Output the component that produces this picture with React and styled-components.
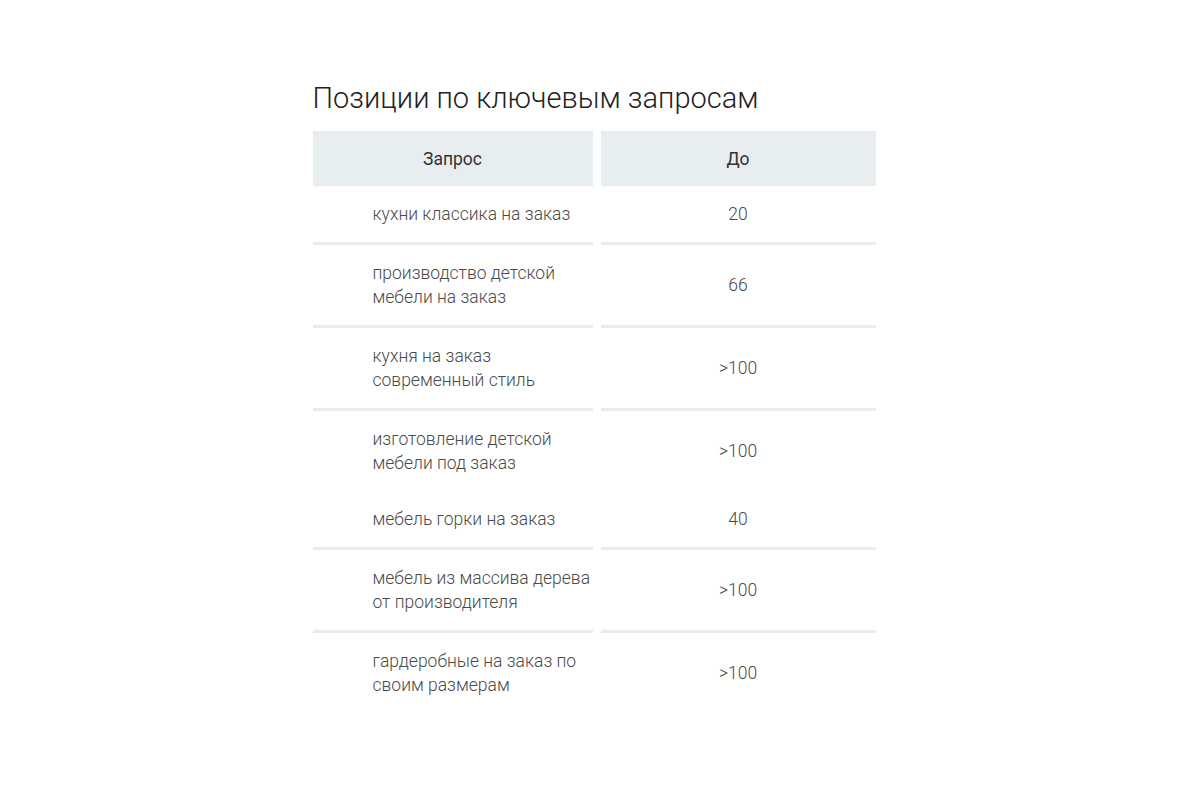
import React from 'react'
import styled, { createGlobalStyle } from 'styled-components'

const rows = [
  { query: 'кухни классика на заказ', pos: '20', line: true },
  { query: 'производство детской мебели на заказ', pos: '66', line: true },
  { query: 'кухня на заказ современный стиль', pos: '>100', line: true },
  { query: 'изготовление детской мебели под заказ', pos: '>100', line: false },
  { query: 'мебель горки на заказ', pos: '40', line: true },
  { query: 'мебель из массива дерева от производителя', pos: '>100', line: true },
  { query: 'гардеробные на заказ по своим размерам', pos: '>100', line: false },
]

function App() {
  return (
    <>
      <GlobalStyle />
      <Section>
        <Title>Позиции по ключевым запросам</Title>
        <Table>
          <HeadCell>Запрос</HeadCell>
          <HeadCell>До</HeadCell>
          {rows.map((r, i) => (
            <React.Fragment key={i}>
              <QueryCell $line={r.line}>{r.query}</QueryCell>
              <PosCell $line={r.line}>{r.pos}</PosCell>
            </React.Fragment>
          ))}
        </Table>
      </Section>
    </>
  )
}

export default App

const GlobalStyle = createGlobalStyle`
body {
    margin: 0;
    background: #fff;
    font-family: Roboto, "Liberation Sans", sans-serif;
}
`

const Section = styled.div`
width: 575px;
margin: 0 auto;
padding-top: 80px;
`

const Title = styled.h2`
margin: 0 0 15px;
font-size: 29px;
line-height: 36px;
font-weight: 300;
color: #222;
`

const Table = styled.div`
display: grid;
grid-template-columns: 280px 275px;
column-gap: 8px;
width: 563px;
`

const HeadCell = styled.div`
height: 55px;
display: flex;
align-items: center;
justify-content: center;
background: #e8edf0;
color: #333;
font-size: 17.5px;
font-weight: 400;
`

const Cell = styled.div`
padding: 16px 0;
display: flex;
align-items: center;
font-size: 17.5px;
line-height: 24px;
font-weight: 300;
color: #4a4a4a;
border-bottom: ${p => (p.$line ? '3px solid #ececec' : 'none')};
`

const QueryCell = styled(Cell)`
padding-left: 60px;
`

const PosCell = styled(Cell)`
justify-content: center;
`
